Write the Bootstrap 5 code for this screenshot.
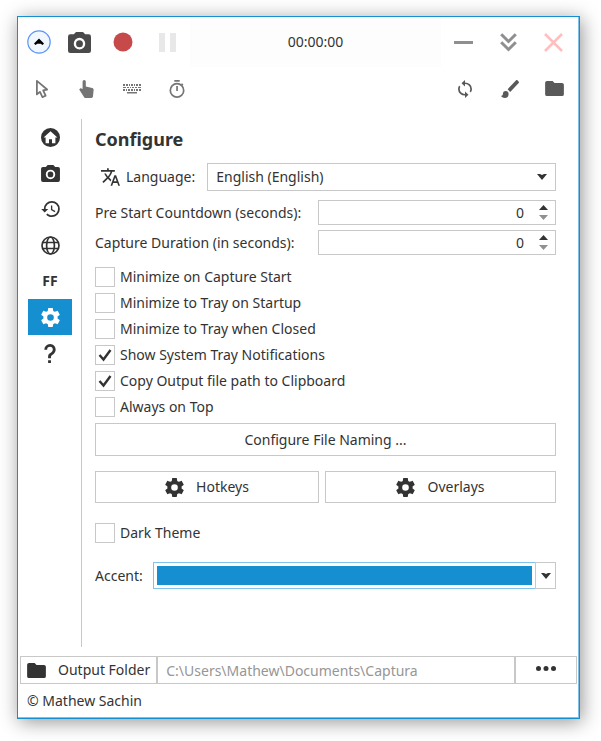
<!DOCTYPE html>
<html lang="en">
<head>
<meta charset="utf-8">
<meta name="viewport" content="width=device-width, initial-scale=1">
<title>Captura</title>
<link href="https://cdn.jsdelivr.net/npm/bootstrap@5.3.0/dist/css/bootstrap.min.css" rel="stylesheet">
<style>
:root { --accent: #168fd1; --ink: #333; --line: #c8c8c8; }
body { font-family: "Noto Sans", "Open Sans", sans-serif; font-size: 14px; line-height: 20px; color: var(--ink); background: #fff; }
.app-window { margin: 16px 21px 22px 17px; min-height: calc(100vh - 38px); border: 1px solid var(--accent); box-shadow: inset -1px -1px 0 #7fc1e6, 2px 3px 18px rgba(0,0,0,.42); background: #fff; }
svg { display: block; fill: currentColor; flex: none; }
.icon-btn { width: 45px; height: 45px; padding: 0; border: 0; background: none; color: inherit; display: flex; align-items: center; justify-content: center; }
.icon-btn.narrow { width: 38px; }
.icon-btn.camera { width: 42px; color: #4a4a4a; }
.title-row { padding: 0 3px 0 2px; height: 50px; }
.tool-row { padding: 0 2px 0 1px; margin-top: -1px; }
.timer-area { background: #fdfdfd; align-self: stretch; }
.tool-left { color: #757575; }
.tool-right { color: #595959; }
.win-btn { color: #8f8f8f; }
.close-btn { color: #ffbfbf; }
.main-area { margin-top: 8px; }
.side-tabs { width: 64px; padding: 0 9px 0 10px; border-right: 1px solid var(--line); }
.side-tabs .nav-link { height: 36px; padding: 0; border-radius: 0; color: var(--ink); display: flex; align-items: center; justify-content: center; font-weight: 700; }
.side-tabs .nav-link.active { background: var(--accent); color: #fff; }
.settings { padding: 8px 23px 0 13px; }
.settings h1 { font-size: 18px; line-height: 24px; font-weight: 700; margin: 0 0 12px; }
.lang-row { margin-bottom: 9px; padding-left: 6px; }
.lang-row label { margin: 0 12px 0 6px; }
.lang-select { height: 28px; padding: 0 32px 0 8px; border: 1px solid var(--line); border-radius: 0; font-size: 14px; line-height: 20px; color: var(--ink); background: url("data:image/svg+xml,%3Csvg xmlns='http://www.w3.org/2000/svg' viewBox='0 0 10 6'%3E%3Cpath d='M0 0h3l2 1 2-1h3L5 6z' fill='%23333'/%3E%3C/svg%3E") no-repeat right 8px center / 10px 6px; }
.spin-row { margin-bottom: 5px; }
.spin-box { width: 238px; height: 25px; border: 1px solid var(--line); }
.spin-box input { border: 0; padding: 0 8px 0 4px; text-align: right; min-width: 0; color: var(--ink); background: none; appearance: textfield; }
.spin-box input::-webkit-inner-spin-button { display: none; }
.spin-box button { border: 0; background: none; padding: 0; width: 23px; height: 10px; display: flex; align-items: center; justify-content: center; color: #333; }
.spin-box button:last-child { color: #909090; }
.checks { margin-top: 12px; gap: 6px; }
.check-line { display: flex; align-items: center; gap: 5px; }
.check-line input { appearance: none; flex: none; width: 20px; height: 20px; margin: 0; border: 1px solid var(--line); border-radius: 0; background: #fff; }
.check-line input:checked { background: url("data:image/svg+xml,%3Csvg xmlns='http://www.w3.org/2000/svg' viewBox='0 0 18 18'%3E%3Cpath d='M3.500 9l4 4.500L14.500 4' fill='none' stroke='%23333' stroke-width='2.400'/%3E%3C/svg%3E") center / 18px 18px no-repeat; }
.flat-btn { border: 1px solid var(--line); border-radius: 0; background: #fff; color: var(--ink); font-size: 14px; line-height: 20px; height: 32px; padding: 0 6px; display: flex; align-items: center; justify-content: center; }
.flat-btn:hover { background: #f5f5f5; color: var(--ink); border-color: var(--line); }
.naming-btn { margin-top: 6px; height: 33px; }
.button-pair { display: grid; grid-template-columns: 224fr 231fr; gap: 6px; margin-top: 15px; }
.dark-row { margin-top: 20px; }
.accent-row { margin-top: 19px; }
.accent-label { margin-right: 10px; }
.accent-swatch { height: 27px; border: 1px solid #7fc4ea; border-right: 0; padding: 3px; background: #fff; }
.accent-swatch span { display: block; height: 100%; background: var(--accent); }
.accent-drop { width: 21px; height: 27px; padding: 0; }
.output-bar { padding: 0 2px; margin-top: 9px; }
.output-bar .flat-btn { height: 28px; }
.output-bar input { height: 28px; border: 1px solid var(--line); padding: 0 8px; color: #969696; min-width: 0; }
.output-bar .more-btn { width: 62px; padding-bottom: 4px; }
.copy-line { padding: 7px 9px; }
</style>
</head>
<body>
<div class="app-window d-flex flex-column">
  <header>
    <div class="title-row d-flex align-items-center">
      <button class="icon-btn narrow" type="button" aria-label="Collapse">
        <svg width="24" height="24" viewBox="0 0 24 24"><circle cx="12" cy="12" r="11.200" fill="#f0f7ff" stroke="#5b95f5" stroke-width="1.200"/><path d="M7 13.400L12 8.600l5 4.800-1.500 1.500-1.800-1.200h-3.400l-1.800 1.200z" fill="#000"/></svg>
      </button>
      <button class="icon-btn camera" type="button" aria-label="Screenshot">
        <svg width="23" height="21" viewBox="2 2 20 18" preserveAspectRatio="none"><path d="M4,4H7L9,2H15L17,4H20A2,2 0 0,1 22,6V18A2,2 0 0,1 20,20H4A2,2 0 0,1 2,18V6A2,2 0 0,1 4,4M12,7A5,5 0 0,0 7,12A5,5 0 0,0 12,17A5,5 0 0,0 17,12A5,5 0 0,0 12,7M12,9A3,3 0 0,1 15,12A3,3 0 0,1 12,15A3,3 0 0,1 9,12A3,3 0 0,1 12,9Z"/></svg>
      </button>
      <button class="icon-btn" type="button" aria-label="Record">
        <svg width="20" height="20" viewBox="0 0 20 20"><circle cx="10" cy="10" r="9.500" fill="#c64a4a"/></svg>
      </button>
      <button class="icon-btn" type="button" aria-label="Pause" disabled>
        <svg width="17" height="19" viewBox="0 0 17 19"><path d="M0 0h6v19H0zM11 0h6v19h-6z" fill="#e8e8e8"/></svg>
      </button>
      <div class="timer-area flex-fill d-flex align-items-center justify-content-center"><time>00:00:00</time></div>
      <button class="icon-btn win-btn" type="button" aria-label="Minimize">
        <svg width="19" height="3" viewBox="0 0 19 3"><path d="M0 0h19v3H0z"/></svg>
      </button>
      <button class="icon-btn win-btn" type="button" aria-label="Minimize to tray">
        <svg width="17" height="19" viewBox="0 0 17 19"><path d="M1.200 1.200l7.300 7.300 7.300-7.300M1.200 9.200l7.300 7.300 7.300-7.300" fill="none" stroke="currentColor" stroke-width="3"/></svg>
      </button>
      <button class="icon-btn close-btn" type="button" aria-label="Close">
        <svg width="19" height="19" viewBox="0 0 19 19"><path d="M1 1l17 17M18 1L1 18" fill="none" stroke="currentColor" stroke-width="2.600"/></svg>
      </button>
    </div>
    <div class="tool-row d-flex justify-content-between">
      <div class="d-flex tool-left">
        <button class="icon-btn" type="button" aria-label="Include cursor">
          <svg width="12" height="18" viewBox="6 2 13.500 20" preserveAspectRatio="none"><path d="M10.070,14.270C10.570,14.030 11.160,14.250 11.400,14.750L13.700,19.740L15.500,18.890L13.190,13.910C12.950,13.410 13.170,12.810 13.670,12.580L13.950,12.500L16.250,12.050L8,5.120V15.900L9.820,14.430L10.070,14.270M13.640,21.970C13.140,22.210 12.540,22 12.310,21.500L10.130,16.760L7.620,18.780C7.450,18.920 7.240,19 7,19A1,1 0 0,1 6,18V3A1,1 0 0,1 7,2C7.240,2 7.470,2.090 7.640,2.230L7.650,2.220L19.140,11.860C19.570,12.220 19.620,12.850 19.270,13.270C19.120,13.450 18.910,13.570 18.700,13.610L15.540,14.230L17.740,18.960C18,19.460 17.760,20.050 17.260,20.280L13.640,21.970Z"/></svg>
        </button>
        <button class="icon-btn" type="button" aria-label="Include clicks">
          <svg width="15" height="18" viewBox="0 0 15 18"><path d="M3.600 1.600a1.600 1.600 0 0 1 3.200 0V6.500l6.400 1.600c1 .3 1.500 1 1.400 2l-.6 6.200c-.1 1-.8 1.700-1.700 1.700H6.700c-.6 0-1-.2-1.400-.6L.2 9.600l.7-.8c.4-.4.900-.5 1.400-.4l1.300.5z"/></svg>
        </button>
        <button class="icon-btn" type="button" aria-label="Include keystrokes">
          <svg width="18" height="10" viewBox="0 0 18 10"><path d="M0 0h2v2H0zM3 0h2v2H3zM6 0h1v2H6zM8 0h2v2H8zM11 0h1v2h-1zM13 0h2v2h-2zM16 0h2v2h-2zM0 3h3v1H0zM4 3h2v1H4zM7 3h1v1H7zM9 3h2v1H9zM12 3h2v1h-2zM15 3h3v1h-3zM0 5h2v2H0zM3 5h1v2H3zM5 5h2v2H5zM8 5h2v2H8zM11 5h1v2h-1zM13 5h2v2h-2zM16 5h2v2h-2zM4 8h10v1.500H4z"/></svg>
        </button>
        <button class="icon-btn" type="button" aria-label="Timer">
          <svg width="16" height="18" viewBox="0 0 16 18"><circle cx="8" cy="10.400" r="6.700" fill="none" stroke="currentColor" stroke-width="1.700"/><path d="M5.300 0h5.400v1.800H5.300zM7.200 6h1.700v5H7.200zM13 3.200l1.400 1.400-1.200 1.200-1.400-1.400z"/></svg>
        </button>
      </div>
      <div class="d-flex tool-right">
        <button class="icon-btn" type="button" aria-label="Refresh">
          <svg width="14" height="18" viewBox="4 1 16 22" preserveAspectRatio="none"><path d="M12,18A6,6 0 0,1 6,12C6,11 6.250,10.030 6.700,9.200L5.240,7.740C4.460,8.970 4,10.430 4,12A8,8 0 0,0 12,20V23L16,19L12,15M12,4V1L8,5L12,9V6A6,6 0 0,1 18,12C18,13 17.750,13.970 17.300,14.800L18.760,16.260C19.540,15.030 20,13.570 20,12A8,8 0 0,0 12,4Z"/></svg>
        </button>
        <button class="icon-btn" type="button" aria-label="Draw">
          <svg width="18" height="18" viewBox="2 3 19 18" preserveAspectRatio="none"><path d="M20.710,4.630L19.370,3.290C19,2.900 18.350,2.900 17.960,3.290L9,12.250L11.750,15L20.710,6.040C21.100,5.650 21.100,5 20.710,4.630M7,14A3,3 0 0,0 4,17C4,18.310 2.840,19 2,19C2.920,20.220 4.500,21 6,21A4,4 0 0,0 10,17A3,3 0 0,0 7,14Z"/></svg>
        </button>
        <button class="icon-btn" type="button" aria-label="Open folder">
          <svg width="19" height="15" viewBox="2 4 20 16"><path d="M10,4H4C2.890,4 2,4.890 2,6V18A2,2 0 0,0 4,20H20A2,2 0 0,0 22,18V8C22,6.890 21.100,6 20,6H12L10,4Z"/></svg>
        </button>
      </div>
    </div>
  </header>

  <div class="main-area d-flex flex-fill">
    <nav class="side-tabs nav flex-column flex-nowrap flex-shrink-0" aria-label="Sections">
      <a class="nav-link" href="#home" aria-label="Home">
        <svg width="19" height="19" viewBox="0 0 19 19"><path fill-rule="evenodd" d="M9.500 0a9.500 9.500 0 1 1 0 19 9.500 9.500 0 0 1 0-19zM9.500 3.300L2.600 9.600h2v5.600h3.400v-4h3v4h3.400V9.600h2z"/></svg>
      </a>
      <a class="nav-link" href="#screenshots" aria-label="Screenshots">
        <svg width="19" height="17" viewBox="2 2 20 18"><path d="M4,4H7L9,2H15L17,4H20A2,2 0 0,1 22,6V18A2,2 0 0,1 20,20H4A2,2 0 0,1 2,18V6A2,2 0 0,1 4,4M12,7A5,5 0 0,0 7,12A5,5 0 0,0 12,17A5,5 0 0,0 17,12A5,5 0 0,0 12,7M12,9A3,3 0 0,1 15,12A3,3 0 0,1 12,15A3,3 0 0,1 9,12A3,3 0 0,1 12,9Z"/></svg>
      </a>
      <a class="nav-link" href="#recent" aria-label="Recent">
        <svg width="19" height="16" viewBox="1 3 21 18"><path d="M13.500,8H12V13L16.280,15.540L17,14.330L13.500,12.250V8M13,3A9,9 0 0,0 4,12H1L4.960,16.030L9,12H6A7,7 0 0,1 13,5A7,7 0 0,1 20,12A7,7 0 0,1 13,19C11.070,19 9.320,18.210 8.060,16.940L6.640,18.360C8.270,20 10.500,21 13,21A9,9 0 0,0 22,12A9,9 0 0,0 13,3"/></svg>
      </a>
      <a class="nav-link" href="#network" aria-label="Network">
        <svg width="19" height="19" viewBox="0 0 19 19"><g fill="none" stroke="currentColor" stroke-width="1.700"><circle cx="9.500" cy="9.500" r="8.500"/><ellipse cx="9.500" cy="9.500" rx="3.900" ry="8.500"/><path d="M1.500 6.500h16M1.500 12.500h16"/></g></svg>
      </a>
      <a class="nav-link" href="#ffmpeg">FF</a>
      <a class="nav-link active" href="#configure" aria-label="Configure" aria-current="page">
        <svg width="19" height="19" viewBox="2 2 20 20"><path id="gear" d="M12,15.500A3.500,3.500 0 0,1 8.500,12A3.500,3.500 0 0,1 12,8.500A3.500,3.500 0 0,1 15.500,12A3.500,3.500 0 0,1 12,15.500M19.430,12.970C19.470,12.650 19.500,12.330 19.500,12C19.500,11.670 19.470,11.340 19.430,11L21.540,9.370C21.730,9.220 21.780,8.950 21.660,8.730L19.660,5.270C19.540,5.050 19.270,4.960 19.050,5.050L16.560,6.050C16.040,5.660 15.500,5.320 14.870,5.070L14.500,2.420C14.460,2.180 14.250,2 14,2H10C9.750,2 9.540,2.180 9.500,2.420L9.130,5.070C8.500,5.320 7.960,5.660 7.440,6.050L4.950,5.050C4.730,4.960 4.460,5.050 4.340,5.270L2.340,8.730C2.210,8.950 2.270,9.220 2.460,9.370L4.570,11C4.530,11.340 4.500,11.670 4.500,12C4.500,12.330 4.530,12.650 4.570,12.970L2.460,14.630C2.270,14.780 2.210,15.050 2.340,15.270L4.340,18.730C4.460,18.950 4.730,19.030 4.950,18.950L7.440,17.940C7.960,18.340 8.500,18.680 9.130,18.930L9.500,21.580C9.540,21.820 9.750,22 10,22H14C14.250,22 14.460,21.820 14.500,21.580L14.870,18.930C15.500,18.670 16.040,18.340 16.560,17.940L19.050,18.950C19.270,19.030 19.540,18.950 19.660,18.730L21.660,15.270C21.780,15.050 21.730,14.780 21.540,14.630L19.430,12.970Z"/></svg>
      </a>
      <a class="nav-link" href="#about" aria-label="About">
        <svg width="12" height="19" viewBox="6 2 12 20"><path d="M10,19H13V22H10V19M12,2C17.350,2.220 19.680,7.620 16.500,11.670C15.670,12.670 14.330,13.330 13.670,14.170C13,15 13,16 13,17H10C10,15.330 10,13.920 10.670,12.920C11.330,11.920 12.670,11.330 13.500,10.670C15.920,8.430 15.320,5.260 12,5A3,3 0 0,0 9,8H6A6,6 0 0,1 12,2Z"/></svg>
      </a>
    </nav>

    <main class="settings flex-fill">
      <h1>Configure</h1>
      <div class="lang-row d-flex align-items-center">
        <svg width="19" height="18" viewBox="1 2 22 20"><path d="M12.870,15.070L10.330,12.560L10.360,12.530C12.100,10.590 13.340,8.360 14.070,6H17V4H10V2H8V4H1V6H12.170C11.500,7.920 10.440,9.750 9,11.350C8.070,10.320 7.300,9.190 6.690,8H4.690C5.420,9.630 6.420,11.170 7.670,12.560L2.580,17.580L4,19L9,14L12.110,17.110L12.870,15.070M18.500,10H16.500L12,22H14L15.120,19H19.870L21,22H23L18.500,10M15.880,17L17.500,12.670L19.120,17H15.880Z"/></svg>
        <label class="flex-shrink-0" for="language">Language:</label>
        <select class="form-select lang-select" id="language"><option>English (English)</option></select>
      </div>
      <div class="spin-row d-flex align-items-center justify-content-between">
        <label for="countdown">Pre Start Countdown (seconds):</label>
        <div class="spin-box d-flex">
          <input class="flex-fill" id="countdown" type="number" min="0" value="0">
          <div class="d-flex flex-column justify-content-center">
            <button type="button" aria-label="Increase countdown"><svg width="9" height="5" viewBox="0 0 9 5"><path d="M0 5l4.500-5L9 5z"/></svg></button>
            <button type="button" aria-label="Decrease countdown"><svg width="9" height="5" viewBox="0 0 9 5"><path d="M0 0l4.500 5L9 0z"/></svg></button>
          </div>
        </div>
      </div>
      <div class="spin-row d-flex align-items-center justify-content-between">
        <label for="duration">Capture Duration (in seconds):</label>
        <div class="spin-box d-flex">
          <input class="flex-fill" id="duration" type="number" min="0" value="0">
          <div class="d-flex flex-column justify-content-center">
            <button type="button" aria-label="Increase duration"><svg width="9" height="5" viewBox="0 0 9 5"><path d="M0 5l4.500-5L9 5z"/></svg></button>
            <button type="button" aria-label="Decrease duration"><svg width="9" height="5" viewBox="0 0 9 5"><path d="M0 0l4.500 5L9 0z"/></svg></button>
          </div>
        </div>
      </div>
      <div class="checks d-flex flex-column align-items-start">
        <label class="check-line"><input type="checkbox">Minimize on Capture Start</label>
        <label class="check-line"><input type="checkbox">Minimize to Tray on Startup</label>
        <label class="check-line"><input type="checkbox">Minimize to Tray when Closed</label>
        <label class="check-line"><input type="checkbox" checked>Show System Tray Notifications</label>
        <label class="check-line"><input type="checkbox" checked>Copy Output file path to Clipboard</label>
        <label class="check-line"><input type="checkbox">Always on Top</label>
      </div>
      <button class="btn flat-btn naming-btn w-100" type="button">Configure File Naming ...</button>
      <div class="button-pair">
        <button class="btn flat-btn" type="button"><svg class="me-2" width="19" height="19" viewBox="2 2 20 20"><use href="#gear"/></svg><span class="ms-1">Hotkeys</span></button>
        <button class="btn flat-btn" type="button"><svg class="me-2" width="19" height="19" viewBox="2 2 20 20"><use href="#gear"/></svg><span class="ms-1">Overlays</span></button>
      </div>
      <div class="dark-row d-flex"><label class="check-line"><input type="checkbox">Dark Theme</label></div>
      <div class="accent-row d-flex align-items-center">
        <span class="accent-label">Accent:</span>
        <button class="accent-swatch flex-fill" type="button" aria-label="Accent color"><span></span></button>
        <button class="btn flat-btn accent-drop" type="button" aria-label="Choose accent color"><svg width="10" height="6" viewBox="0 0 10 6"><path d="M0 0h3l2 1 2-1h3L5 6z"/></svg></button>
      </div>
    </main>
  </div>

  <footer>
    <div class="output-bar d-flex">
      <button class="btn flat-btn" type="button"><svg class="me-2" width="19" height="15" viewBox="2 4 20 16"><path d="M10,4H4C2.890,4 2,4.890 2,6V18A2,2 0 0,0 4,20H20A2,2 0 0,0 22,18V8C22,6.890 21.100,6 20,6H12L10,4Z"/></svg><span class="ms-1">Output Folder</span></button>
      <input class="flex-fill" type="text" value="C:\Users\Mathew\Documents\Captura" aria-label="Output folder path" readonly>
      <button class="btn flat-btn more-btn" type="button" aria-label="More"><svg width="20" height="5" viewBox="0 0 20 5"><circle cx="2.500" cy="2.500" r="2.500"/><circle cx="10" cy="2.500" r="2.500"/><circle cx="17.500" cy="2.500" r="2.500"/></svg></button>
    </div>
    <div class="copy-line">© Mathew Sachin</div>
  </footer>
</div>
<script src="https://cdn.jsdelivr.net/npm/bootstrap@5.3.0/dist/js/bootstrap.bundle.min.js"></script>
</body>
</html>
